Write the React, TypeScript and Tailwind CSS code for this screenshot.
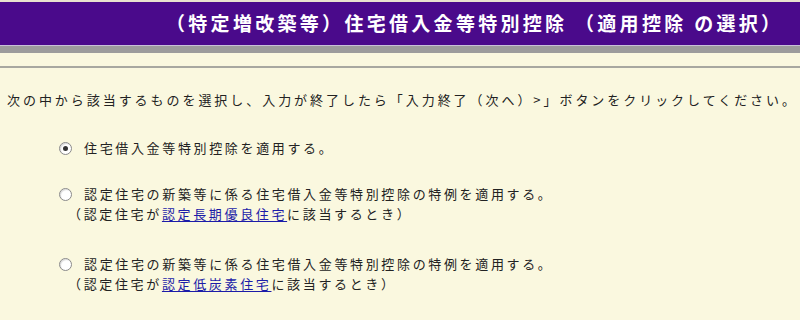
import React from "react";

const jp = { fontFamily: '"Noto Sans CJK JP", "Noto Sans", sans-serif' };

function Radio({ checked }: { checked?: boolean }) {
  return (
    <span className="relative inline-flex h-[13px] w-[13px] shrink-0 items-center justify-center rounded-full border border-[#8a8a8a] bg-white shadow-[inset_1px_1px_1px_rgba(0,0,0,0.15)]">
      {checked && <span className="h-[5px] w-[5px] rounded-full bg-[#333]" />}
    </span>
  );
}

function Link({ children }: { children: React.ReactNode }) {
  return <span className="text-[#1c1ca8] underline underline-offset-2">{children}</span>;
}

export default function App() {
  return (
    <div className="h-[320px] w-[800px] overflow-hidden bg-[#faf8df] text-[#222]" style={jp}>
      <div className="h-[2px] bg-[#e9e2cf]" />
      <div className="flex h-[43px] items-center bg-[#4a0a8b] pl-[166px]">
        <span className="whitespace-nowrap text-[19px] font-bold tracking-[3.3px] text-white">
          （特定増改築等）住宅借入金等特別控除&nbsp;（適用控除&nbsp;の選択）
        </span>
      </div>
      <div className="h-[1px] bg-[#c8c0d8]" />
      <div className="h-[7px] bg-[#9c9c9c]" />
      <div className="h-[13px]" />
      <div className="h-[2px] bg-[#a8a8a0]" />
      <div className="whitespace-nowrap pl-[7px] pt-[22px] text-[13px] leading-[20px] tracking-[2.95px]">
        次の中から該当するものを選択し、入力が終了したら「入力終了（次へ）&gt;」ボタンをクリックしてください。
      </div>
      <div className="flex flex-col whitespace-nowrap pl-[59px] text-[13px] leading-[20px] tracking-[2.65px]">
        <div className="mt-[28px] flex items-center gap-[12px]">
          <Radio checked />
          <span>住宅借入金等特別控除を適用する。</span>
        </div>
        <div className="mt-[26px] flex items-center gap-[12px]">
          <Radio />
          <span>認定住宅の新築等に係る住宅借入金等特別控除の特例を適用する。</span>
        </div>
        <div className="pl-[9px]">
          （認定住宅が<Link>認定長期優良住宅</Link>に該当するとき）
        </div>
        <div className="mt-[30px] flex items-center gap-[12px]">
          <Radio />
          <span>認定住宅の新築等に係る住宅借入金等特別控除の特例を適用する。</span>
        </div>
        <div className="pl-[9px]">
          （認定住宅が<Link>認定低炭素住宅</Link>に該当するとき）
        </div>
      </div>
    </div>
  );
}
